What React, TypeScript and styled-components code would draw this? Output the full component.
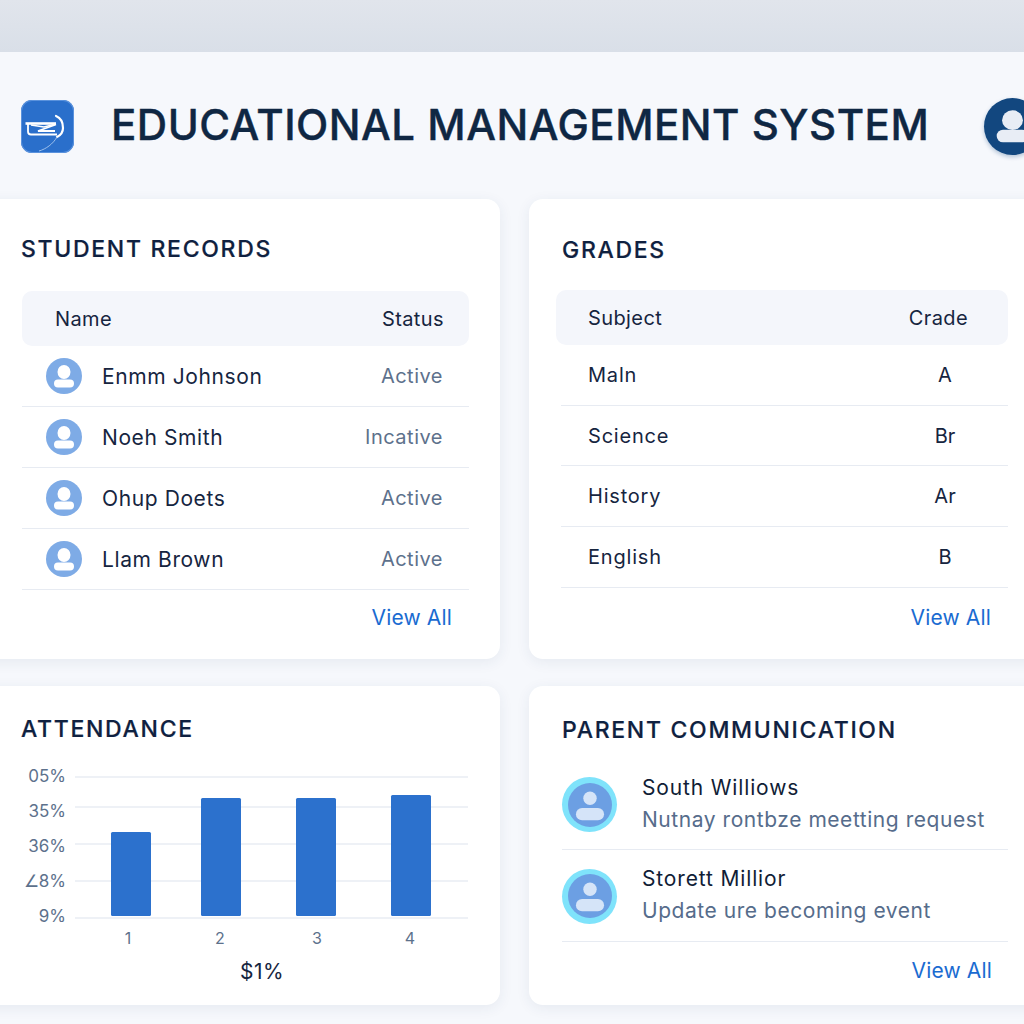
import React from "react";
import styled, { createGlobalStyle } from "styled-components";

const GlobalStyle = createGlobalStyle`
  html, body {
    margin: 0;
    padding: 0;
    width: 1024px;
    height: 1024px;
    overflow: hidden;
    background: #f6f8fc;
    font-family: Inter, "Noto Sans", sans-serif;
  }
`;

const Page = styled.div`
  width: 1024px;
  height: 1024px;
  overflow: hidden;
  background: #f6f8fc;
`;

const TopBand = styled.div`
  height: 52px;
  background: linear-gradient(180deg, #e1e5ec 0%, #d9dfe8 100%);
`;

const Header = styled.header`
  height: 147px;
  display: flex;
  align-items: center;
  padding-left: 21px;
  box-sizing: border-box;
  padding-top: 1px;
`;

const Logo = styled.div`
  width: 53px;
  height: 53px;
  flex: none;
  border-radius: 11px;
  background: #2a6fcb;
  box-shadow: inset 0 0 0 1px #5a92dd;
  display: flex;
  align-items: center;
  justify-content: center;
`;

const Title = styled.h1`
  margin: 0 0 2px 37px;
  font-size: 42px;
  line-height: 50px;
  font-weight: 500;
  letter-spacing: 0.5px;
  color: #0f2743;
  white-space: nowrap;
  flex: none;
  width: 873px;
  -webkit-text-stroke: 0.4px #0f2743;
`;

const HeaderAvatar = styled.div`
  width: 57px;
  height: 57px;
  flex: none;
  border-radius: 50%;
  background: #12477f;
  box-shadow: 0 2px 4px rgba(18, 71, 127, 0.3);
`;

const Grid = styled.main`
  display: grid;
  grid-template-columns: 524px 524px;
  grid-template-rows: 460px 319px;
  column-gap: 29px;
  row-gap: 27px;
  margin-left: -24px;
`;

const Card = styled.section`
  background: #fff;
  border-radius: 14px;
  box-shadow: 0 3px 14px rgba(40, 60, 100, 0.08);
  box-sizing: border-box;
  position: relative;
`;

const CardTitle = styled.h2<{ $left: number; $top: number }>`
  margin: 0;
  padding: ${(p) => p.$top}px 0 0 ${(p) => p.$left}px;
  font-size: 23px;
  line-height: 28px;
  font-weight: 500;
  letter-spacing: 1.7px;
  color: #0f2140;
  -webkit-text-stroke: 0.2px #0f2140;
`;

const TableWrap = styled.div<{ $left: number; $top: number; $width: number }>`
  margin: ${(p) => p.$top}px 0 0 ${(p) => p.$left}px;
  width: ${(p) => p.$width}px;
`;

const TableHead = styled.div<{ $pad: number; $right: number }>`
  height: 55px;
  background: #f4f6fb;
  border-radius: 10px;
  display: flex;
  align-items: center;
  justify-content: space-between;
  padding: 0 ${(p) => p.$right}px 0 ${(p) => p.$pad}px;
  font-size: 20px;
  color: #16253f;
  letter-spacing: 0.4px;
`;

const Row = styled.div<{ $inset: number; $height: number }>`
  height: ${(p) => p.$height}px;
  margin-left: ${(p) => p.$inset}px;
  display: flex;
  align-items: center;
  border-bottom: 1px solid #e7ebf2;
  box-sizing: border-box;
`;

const RowAvatar = styled.div`
  margin-left: 24px;
  width: 36px;
  height: 36px;
  flex: none;
  border-radius: 50%;
  background: #7eabe6;
`;

const RowName = styled.span`
  margin-left: 20px;
  font-size: 21px;
  letter-spacing: 0.6px;
  color: #16253f;
  flex: 1;
`;

const RowStatus = styled.span`
  font-size: 20px;
  letter-spacing: 0.5px;
  color: #5d718c;
  margin-right: 26px;
`;

const Subject = styled.span`
  margin-left: 27px;
  font-size: 20px;
  letter-spacing: 0.8px;
  color: #16253f;
  flex: 1;
`;

const GradeValue = styled.span`
  width: 60px;
  margin-right: 33px;
  text-align: center;
  font-size: 20px;
  color: #16253f;
`;

const ViewAll = styled.a`
  display: block;
  text-align: right;
  font-size: 21px;
  letter-spacing: 0.15px;
  color: #1a6bd1;
  text-decoration: none;
  line-height: 26px;
`;

const CardFooter = styled.div<{ $top: number; $right: number }>`
  padding: ${(p) => p.$top}px ${(p) => p.$right}px 0 0;
`;

const ChartBox = styled.div`
  margin: 21px 0 0 24px;
  width: 500px;
`;

const ChartCaption = styled.div`
  padding-left: 24px;
  text-align: center;
  font-size: 21px;
  line-height: 26px;
  color: #16253f;
  letter-spacing: 0.5px;
  margin-top: 5px;
`;

const MessageList = styled.div`
  margin: 15px 0 0 33px;
  width: 446px;
`;

const Message = styled.div<{ $height: number }>`
  height: ${(p) => p.$height}px;
  display: flex;
  align-items: center;
  border-bottom: 1px solid #e7ebf2;
  box-sizing: border-box;
  padding-top: 1px;
`;

const MessageAvatar = styled.div`
  width: 55px;
  height: 55px;
  flex: none;
  border-radius: 50%;
  background: #7fe3fb;
  display: flex;
  align-items: center;
  justify-content: center;
`;

const MessageBody = styled.div`
  margin-left: 25px;
`;

const MessageName = styled.div`
  font-size: 21px;
  line-height: 30px;
  letter-spacing: 0.85px;
  color: #101d36;
`;

const MessageText = styled.div`
  font-size: 21px;
  line-height: 34px;
  letter-spacing: 0.55px;
  color: #566c8b;
`;

type GlyphShape = { cy: number; rx: number; ry: number; x: number; y: number; w: number; h: number };

const glyphShapes: Record<string, GlyphShape> = {
  header: { cy: 14, rx: 6.6, ry: 6.2, x: 8, y: 20, w: 20, h: 8 },
  row: { cy: 14, rx: 6.5, ry: 7, x: 8, y: 21.5, w: 20, h: 8 },
  message: { cy: 12.5, rx: 5.5, ry: 5.5, x: 6.5, y: 20.5, w: 23, h: 10 },
};

const UserGlyph = ({
  size,
  fill,
  disc,
  shape,
}: {
  size: number;
  fill: string;
  disc?: string;
  shape: string;
}) => {
  const s = glyphShapes[shape];
  return (
    <svg width={size} height={size} viewBox="0 0 36 36" style={{ display: "block" }}>
      {disc && <circle cx="18" cy="18" r="18" fill={disc} />}
      <ellipse cx="18" cy={s.cy} rx={s.rx} ry={s.ry} fill={fill} />
      <rect x={s.x} y={s.y} width={s.w} height={s.h} rx={s.h / 2} fill={fill} />
    </svg>
  );
};

const LogoMark = () => (
  <svg width="53" height="53" viewBox="0 0 53 53">
    <path d="M4.5 23.5H35" fill="none" stroke="#fff" strokeWidth="2.6" />
    <path d="M10 25l13 2 12-3" fill="none" stroke="#fff" strokeWidth="1.3" />
    <path d="M35 24.5L17 31h17" fill="none" stroke="#fff" strokeWidth="1.8" />
    <path d="M7 23.5v8c0 2 1 3 3 3h26" fill="none" stroke="#fff" strokeWidth="1.8" />
    <path d="M35 16c5 2 7 7 7 12 0 4-2 7-6 9" fill="none" stroke="#fff" strokeWidth="2.2" strokeLinecap="round" />
    <path d="M36 37c-4 7-11 12-18 14" fill="none" stroke="#9cc0ec" strokeWidth="1" />
  </svg>
);

const yTicks = [
  { label: "05%", line: 13, text: 12 },
  { label: "35%", line: 43, text: 47 },
  { label: "36%", line: 80, text: 82 },
  { label: "∠8%", line: 117, text: 117 },
  { label: "9%", line: 154, text: 152 },
];

const bars = [
  { x: 111, top: 68, label: "1", labelX: 128 },
  { x: 201, top: 34, label: "2", labelX: 220 },
  { x: 296, top: 34, label: "3", labelX: 317 },
  { x: 391, top: 31, label: "4", labelX: 410 },
];

const AttendanceChart = () => (
  <svg width="500" height="190" viewBox="0 0 500 190" style={{ display: "block" }} fontFamily="Inter, sans-serif">
    {yTicks.map((t) => (
      <g key={t.label}>
        <line x1="75" x2="468" y1={t.line} y2={t.line} stroke="#e8ecf3" strokeWidth="1.5" />
        <text x="66" y={t.text + 6} textAnchor="end" fontSize="17" fill="#5d718c">
          {t.label}
        </text>
      </g>
    ))}
    {bars.map((b) => (
      <g key={b.label}>
        <rect x={b.x} y={b.top} width="40" height={152 - b.top} rx="1.5" fill="#2c71cd" />
        <text x={b.labelX} y="180" textAnchor="middle" fontSize="16" fill="#5d718c">
          {b.label}
        </text>
      </g>
    ))}
  </svg>
);

const students = [
  { name: "Enmm Johnson", status: "Active" },
  { name: "Noeh Smith", status: "Incative" },
  { name: "Ohup Doets", status: "Active" },
  { name: "Llam Brown", status: "Active" },
];

const grades = [
  { subject: "Maln", grade: "A" },
  { subject: "Science", grade: "Br" },
  { subject: "History", grade: "Ar" },
  { subject: "English", grade: "B" },
];

const messages = [
  { name: "South Williows", text: "Nutnay rontbze meetting request", height: 91 },
  { name: "Storett Millior", text: "Update ure becoming event", height: 92 },
];

export default function App() {
  return (
    <Page>
      <GlobalStyle />
      <TopBand />
      <Header>
        <Logo>
          <LogoMark />
        </Logo>
        <Title>EDUCATIONAL MANAGEMENT SYSTEM</Title>
        <HeaderAvatar>
          <UserGlyph size={57} fill="#e8edf5" shape="header" />
        </HeaderAvatar>
      </Header>
      <Grid>
        <Card>
          <CardTitle $left={45} $top={36}>
            STUDENT RECORDS
          </CardTitle>
          <TableWrap $left={46} $top={28} $width={447}>
            <TableHead $pad={33} $right={25}>
              <span>Name</span>
              <span>Status</span>
            </TableHead>
            {students.map((s) => (
              <Row key={s.name} $inset={0} $height={61}>
                <RowAvatar>
                  <UserGlyph size={36} fill="#fff" shape="row" />
                </RowAvatar>
                <RowName>{s.name}</RowName>
                <RowStatus>{s.status}</RowStatus>
              </Row>
            ))}
          </TableWrap>
          <CardFooter $top={15} $right={48}>
            <ViewAll>View All</ViewAll>
          </CardFooter>
        </Card>
        <Card>
          <CardTitle $left={33} $top={37}>
            GRADES
          </CardTitle>
          <TableWrap $left={27} $top={26} $width={452}>
            <TableHead $pad={32} $right={40}>
              <span>Subject</span>
              <span>Crade</span>
            </TableHead>
            {grades.map((g) => (
              <Row key={g.subject} $inset={5} $height={60.7}>
                <Subject>{g.subject}</Subject>
                <GradeValue>{g.grade}</GradeValue>
              </Row>
            ))}
          </TableWrap>
          <CardFooter $top={17} $right={62}>
            <ViewAll>View All</ViewAll>
          </CardFooter>
        </Card>
        <Card>
          <CardTitle $left={45} $top={29}>
            ATTENDANCE
          </CardTitle>
          <ChartBox>
            <AttendanceChart />
            <ChartCaption>$1%</ChartCaption>
          </ChartBox>
        </Card>
        <Card>
          <CardTitle $left={33} $top={30}>
            PARENT COMMUNICATION
          </CardTitle>
          <MessageList>
            {messages.map((m) => (
              <Message key={m.name} $height={m.height}>
                <MessageAvatar>
                  <UserGlyph size={44} fill="#d5e4f8" disc="#6c9fe3" shape="message" />
                </MessageAvatar>
                <MessageBody>
                  <MessageName>{m.name}</MessageName>
                  <MessageText>{m.text}</MessageText>
                </MessageBody>
              </Message>
            ))}
          </MessageList>
          <CardFooter $top={16} $right={61}>
            <ViewAll>View All</ViewAll>
          </CardFooter>
        </Card>
      </Grid>
    </Page>
  );
}
